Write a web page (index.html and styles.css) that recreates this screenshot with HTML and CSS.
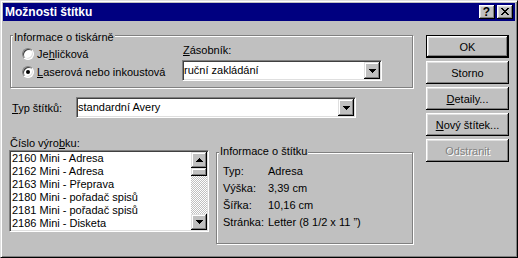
FILE: index.html
```html
<!DOCTYPE html>
<html lang="cs">
<head>
    <meta charset="UTF-8">
    <title>Možnosti štítku</title>
    <link rel="stylesheet" href="styles.css">
</head>
<body>
    <div class="window">
        <div class="titlebar">
            <span class="title">Možnosti štítku</span>
            <div class="title-buttons">
                <span class="tbtn help">?</span>
                <span class="tbtn close">
                    <svg width="8" height="7" viewBox="0 0 8 7" shape-rendering="crispEdges"><path d="M0 0h2v1H0zM6 0h2v1H6zM1 1h2v1H1zM5 1h2v1H5zM2 2h4v1H2zM3 3h2v1H3zM2 4h4v1H2zM1 5h2v1H1zM5 5h2v1H5zM0 6h2v1H0zM6 6h2v1H6z" fill="#000"/></svg>
                </span>
            </div>
        </div>

        <div class="body">
            <div class="main">
                <div class="group printer">
                    <span class="group-label">Informace o tiskárně</span>
                    <div class="radios">
                        <div class="radio"><span class="dot"></span>Je<u>h</u>ličková</div>
                        <div class="radio"><span class="dot checked"></span><u>L</u>aserová nebo inkoustová</div>
                    </div>
                    <div class="tray">
                        <div class="field-label"><u>Z</u>ásobník:</div>
                        <div class="combo tray-combo">
                            <span class="combo-text">ruční zakládání</span>
                            <span class="drop-btn">
                                <svg width="7" height="4" viewBox="0 0 7 4" shape-rendering="crispEdges"><path d="M0 0h7v1H0zM1 1h5v1H1zM2 2h3v1H2zM3 3h1v1H3z" fill="#000"/></svg>
                            </span>
                        </div>
                    </div>
                </div>

                <div class="type-row">
                    <span class="type-label"><u>T</u>yp štítků:</span>
                    <div class="combo type-combo">
                        <span class="combo-text">standardní Avery</span>
                        <span class="drop-btn">
                            <svg width="7" height="4" viewBox="0 0 7 4" shape-rendering="crispEdges"><path d="M0 0h7v1H0zM1 1h5v1H1zM2 2h3v1H2zM3 3h1v1H3z" fill="#000"/></svg>
                        </span>
                    </div>
                </div>

                <div class="lower">
                    <div class="products">
                        <div class="field-label">Číslo výro<u>b</u>ku:</div>
                        <div class="listbox">
                            <ul class="items">
                                <li>2160 Mini - Adresa</li>
                                <li>2162 Mini - Adresa</li>
                                <li>2163 Mini - Přeprava</li>
                                <li>2180 Mini - pořadač spisů</li>
                                <li>2181 Mini - pořadač spisů</li>
                                <li>2186 Mini - Disketa</li>
                            </ul>
                            <div class="scrollbar">
                                <span class="sb-btn">
                                    <svg width="7" height="4" viewBox="0 0 7 4" shape-rendering="crispEdges"><path d="M3 0h1v1H3zM2 1h3v1H2zM1 2h5v1H1zM0 3h7v1H0z" fill="#000"/></svg>
                                </span>
                                <span class="sb-thumb"></span>
                                <span class="sb-track"></span>
                                <span class="sb-btn">
                                    <svg width="7" height="4" viewBox="0 0 7 4" shape-rendering="crispEdges"><path d="M0 0h7v1H0zM1 1h5v1H1zM2 2h3v1H2zM3 3h1v1H3z" fill="#000"/></svg>
                                </span>
                            </div>
                        </div>
                    </div>

                    <div class="group info">
                        <span class="group-label">Informace o štítku</span>
                        <div class="info-rows">
                            <span>Typ:</span><span>Adresa</span>
                            <span>Výška:</span><span>3,39 cm</span>
                            <span>Šířka:</span><span>10,16 cm</span>
                            <span>Stránka:</span><span>Letter (8 1/2 x 11 ”)</span>
                        </div>
                    </div>
                </div>
            </div>

            <div class="buttons">
                <div class="btn default">OK</div>
                <div class="btn">Storno</div>
                <div class="btn"><span><u>D</u>etaily...</span></div>
                <div class="btn"><span><u>N</u>ový štítek...</span></div>
                <div class="btn disabled">Odstranit</div>
            </div>
        </div>
    </div>
</body>
</html>
```

FILE: styles.css
```css
* {
    box-sizing: border-box;
}

body {
    margin: 0;
    font-family: "Liberation Sans", Arial, sans-serif;
    font-size: 11px;
    color: #000;
    background: #c0c0c0;
}

u {
    text-decoration: underline;
    text-underline-offset: 1px;
}

.window {
    width: 518px;
    height: 258px;
    background: #c0c0c0;
    border: 1px solid;
    border-color: #dfdfdf #000 #000 #dfdfdf;
    box-shadow: inset 1px 1px #fff, inset -1px -1px #808080;
    padding: 2px;
}

.titlebar {
    height: 18px;
    background: #000080;
    color: #fff;
    display: flex;
    align-items: center;
    justify-content: space-between;
    padding: 0 2px;
}

.title {
    font-weight: bold;
    font-size: 12px;
    line-height: 18px;
}

.title-buttons {
    display: flex;
    gap: 2px;
}

.tbtn {
    width: 16px;
    height: 14px;
    background: #c0c0c0;
    color: #000;
    box-shadow: inset -1px -1px #000, inset 1px 1px #fff, inset -2px -2px #808080, inset 2px 2px #dfdfdf;
    display: flex;
    align-items: center;
    justify-content: center;
}

.help {
    font-weight: bold;
    font-size: 12px;
    line-height: 14px;
    padding-right: 1px;
}

.close svg {
    margin-top: -1px;
}

.body {
    display: flex;
    padding: 14px 0 0 6px;
}

.main {
    width: 404px;
}

/* group boxes */
.group {
    position: relative;
    border: 1px solid #808080;
    box-shadow: inset 1px 1px #fff, 1px 1px #fff;
}

.group-label {
    position: absolute;
    top: -5px;
    left: 2px;
    padding: 0 1px;
    line-height: 13px;
    background: #c0c0c0;
}

.printer {
    margin-left: 1px;
    height: 53px;
    display: flex;
}

.radios {
    width: 171px;
    padding: 9px 0 0 11px;
}

.radio {
    display: flex;
    align-items: center;
    height: 18px;
    white-space: nowrap;
}

.dot {
    position: relative;
    width: 12px;
    height: 12px;
    margin-right: 3px;
    border-radius: 50%;
    background: #fff;
    border: 1px solid;
    border-color: #808080 #fff #fff #808080;
    box-shadow: inset 1px 1px #404040, inset -1px -1px #dfdfdf;
}

.dot.checked::after {
    content: '';
    position: absolute;
    left: 3px;
    top: 3px;
    width: 4px;
    height: 4px;
    border-radius: 50%;
    background: #000;
}

.tray {
    padding-top: 8px;
}

.field-label {
    line-height: 13px;
    padding-left: 1px;
}

/* combo boxes */
.combo {
    display: flex;
    height: 21px;
    margin-top: 3px;
    background: #fff;
    border: 1px solid;
    border-color: #808080 #fff #fff #808080;
    box-shadow: inset 1px 1px #404040, inset -1px -1px #dfdfdf;
    padding: 1px;
}

.combo-text {
    flex: 1;
    line-height: 17px;
    white-space: nowrap;
}

.drop-btn,
.sb-btn {
    width: 16px;
    height: 17px;
    background: #c0c0c0;
    box-shadow: inset -1px -1px #000, inset 1px 1px #dfdfdf, inset -2px -2px #808080, inset 2px 2px #fff;
    display: flex;
    align-items: center;
    justify-content: center;
}

.tray-combo {
    width: 200px;
}

.type-row {
    display: flex;
    align-items: center;
    margin-top: 9px;
}

.type-label {
    width: 67px;
    padding-left: 3px;
}

.type-combo {
    width: 280px;
    margin-top: 0;
}

.lower {
    display: flex;
    margin-top: 19px;
}

.products {
    width: 200px;
}

/* list box */
.listbox {
    display: flex;
    height: 82px;
    background: #fff;
    border: 1px solid;
    border-color: #808080 #fff #fff #808080;
    box-shadow: inset 1px 1px #404040, inset -1px -1px #dfdfdf;
    padding: 1px;
}

.items {
    flex: 1;
    list-style: none;
    margin: 0;
    padding: 0 0 0 1px;
    line-height: 13px;
    white-space: nowrap;
    overflow: hidden;
}

.scrollbar {
    width: 16px;
    display: flex;
    flex-direction: column;
}

.sb-btn {
    height: 16px;
}

.sb-thumb {
    height: 8px;
    background: #c0c0c0;
    box-shadow: inset -1px -1px #000, inset 1px 1px #dfdfdf, inset -2px -2px #808080, inset 2px 2px #fff;
}

.sb-track {
    flex: 1;
    background: repeating-conic-gradient(#fff 0 25%, #c0c0c0 0 50%) 0 0 / 2px 2px;
}

.info {
    width: 197px;
    height: 92px;
    margin: 15px 0 0 7px;
}

.info .group-label {
    top: -8px;
}

.info-rows {
    display: grid;
    grid-template-columns: 45px 1fr;
    padding: 10px 0 0 6px;
    line-height: 17px;
    white-space: nowrap;
}

/* command buttons */
.buttons {
    display: flex;
    flex-direction: column;
    gap: 3px;
    margin-left: 13px;
}

.btn {
    width: 83px;
    height: 23px;
    background: #c0c0c0;
    box-shadow: inset -1px -1px #000, inset 1px 1px #fff, inset -2px -2px #808080, inset 2px 2px #dfdfdf;
    display: flex;
    align-items: center;
    justify-content: center;
    white-space: nowrap;
}

.btn.default {
    border: 1px solid #000;
}

.btn.disabled {
    color: #808080;
    text-shadow: 1px 1px #fff;
}
```
